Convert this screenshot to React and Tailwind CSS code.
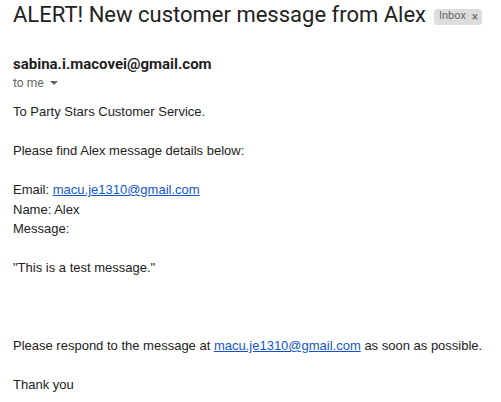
import React from 'react';

const Link = ({ children }) => (
    <a href="#" className="text-[#1155cc] underline">{children}</a>
);

const App = () => {
    return (
        <div className="w-[501px] h-[402px] bg-white overflow-hidden pl-[13px]">
            <div className="flex items-center pt-[1px]">
                <h1 className="text-[22px] leading-[28px] text-[#222222] font-['Roboto',sans-serif] font-normal">
                    ALERT! New customer message from Alex
                </h1>
                <span className="ml-[8px] mt-[3px] bg-[#dddddd] rounded-[3px] pl-[5px] pr-[4px] h-[16px] flex items-center text-[11px] text-[#666666] font-['Roboto',sans-serif]">
                    Inbox <span className="ml-[6px] text-[12px]">×</span>
                </span>
            </div>
            <div className="mt-[25px] font-['Roboto',sans-serif]">
                <div className="text-[15px] leading-[20px] font-bold text-[#1f1f1f]">sabina.i.macovei@gmail.com</div>
                <div className="flex items-center text-[12px] leading-[18px] text-[#5f6368]">
                    to me
                    <svg width="10" height="10" viewBox="0 0 10 10" className="ml-[5px]">
                        <path d="M1 3 L9 3 L5 7 Z" fill="#5f6368" />
                    </svg>
                </div>
            </div>
            <div className="mt-[10px] font-['Liberation_Sans',Arial,sans-serif] text-[13px] leading-[19.5px] text-[#222222]">
                <div>To Party Stars Customer Service.</div>
                <div className="h-[19.5px]" />
                <div>Please find Alex message details below:</div>
                <div className="h-[19.5px]" />
                <div>Email: <Link>macu.je1310@gmail.com</Link></div>
                <div>Name: Alex</div>
                <div>Message:</div>
                <div className="h-[19.5px]" />
                <div>"This is a test message."</div>
                <div className="h-[58.5px]" />
                <div>Please respond to the message at <Link>macu.je1310@gmail.com</Link> as soon as possible.</div>
                <div className="h-[19.5px]" />
                <div>Thank you</div>
            </div>
        </div>
    );
};

export default App;
